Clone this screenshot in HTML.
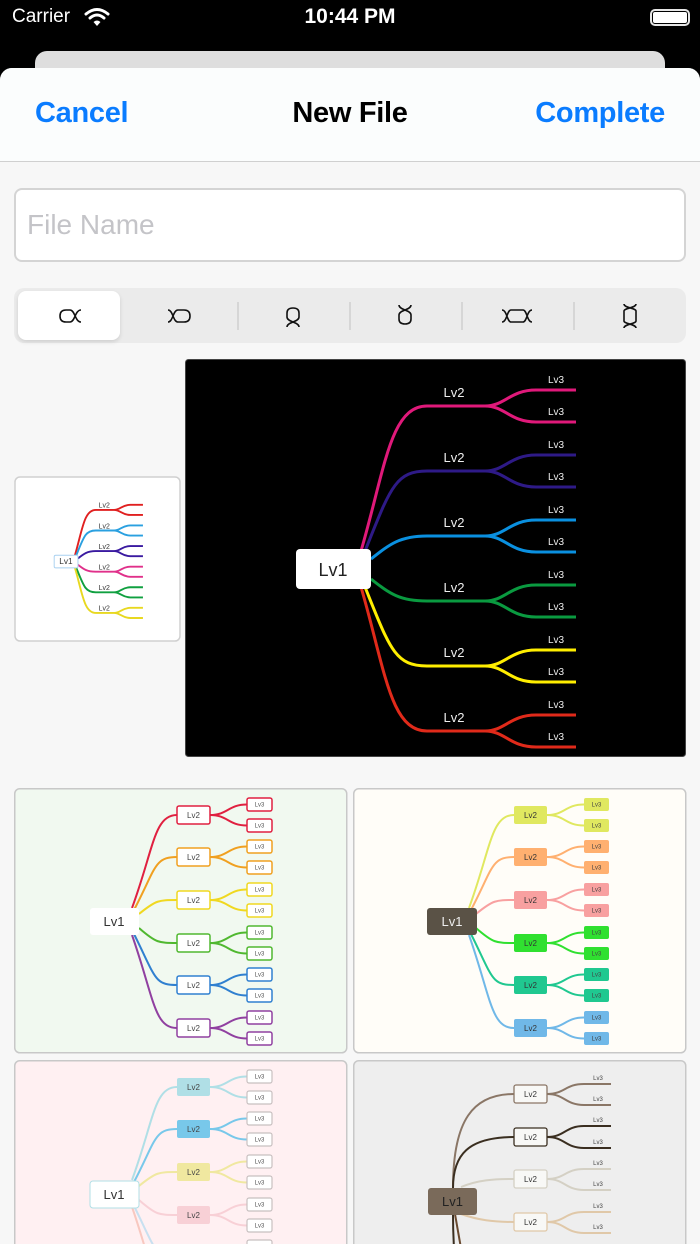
<!DOCTYPE html>
<html><head><meta charset="utf-8"><style>
*{margin:0;padding:0;box-sizing:border-box}
html,body{width:700px;height:1244px;overflow:hidden;background:#000}
#wrap{position:relative;width:700px;height:1244px;overflow:hidden;background:#000;font-family:"Liberation Sans",sans-serif}
.abs{position:absolute}
svg text{font-family:"Liberation Sans",sans-serif;text-anchor:middle}
</style></head><body><div id="wrap">
<div class="abs" style="left:12px;top:6px;color:#fff;font-size:19px">Carrier</div>
<svg class="abs" style="left:84px;top:7px" width="26" height="20" viewBox="0 0 26 20"><path d="M2,7 Q13,-2 24,7" stroke="#fff" stroke-width="3" fill="none" stroke-linecap="round"/><path d="M6,11 Q13,5 20,11" stroke="#fff" stroke-width="3" fill="none" stroke-linecap="round"/><path d="M9.5,15 L13,19 L16.5,15 Q13,12 9.5,15Z" fill="#fff"/></svg>
<div class="abs" style="left:0;width:700px;top:5px;text-align:center;color:#fff;font-size:21px;font-weight:bold">10:44 PM</div>
<div class="abs" style="left:650px;top:9px;width:40px;height:17px;border:2px solid #fff;border-radius:5px;opacity:.9"></div>
<div class="abs" style="left:653px;top:12px;width:34px;height:11px;background:#fff;border-radius:2px"></div>
<div class="abs" style="left:35px;top:51px;width:630px;height:40px;background:#dedede;border-radius:12px"></div>
<div class="abs" style="left:0;top:68px;width:700px;height:1176px;background:#f7f7f7;border-radius:12px 12px 0 0"></div>
<div class="abs" style="left:0;top:68px;width:700px;height:94px;background:#fbfdfd;border-radius:12px 12px 0 0;border-bottom:1px solid #d0d0d0"></div>
<div class="abs" style="left:35px;top:97px;color:#0a7cff;font-size:29px;font-weight:bold;letter-spacing:-0.3px">Cancel</div>
<div class="abs" style="left:0;width:700px;top:97px;text-align:center;color:#000;font-size:29px;font-weight:bold;letter-spacing:-0.3px">New File</div>
<div class="abs" style="right:35px;top:97px;color:#0a7cff;font-size:29px;font-weight:bold;letter-spacing:-0.3px">Complete</div>
<div class="abs" style="left:14px;top:188px;width:672px;height:74px;background:#fff;border:2px solid #d4d4d4;border-radius:8px;padding:19px 11px;font-size:28px;color:#c4c4c8">File Name</div>
<div class="abs" style="left:14px;top:288px;width:672px;height:55px;background:#ebebeb;border-radius:10px"></div>
<div class="abs" style="left:18px;top:291px;width:102px;height:49px;background:#fff;border-radius:8px;box-shadow:0 2px 4px rgba(0,0,0,.12)"></div>
<svg class="abs" style="left:14px;top:288px" width="672" height="55" viewBox="0 0 672 55" fill="none" stroke="#111" stroke-width="1.6">
<line x1="224" y1="14" x2="224" y2="42" stroke="#d0d0d0"/><line x1="336" y1="14" x2="336" y2="42" stroke="#d0d0d0"/><line x1="448" y1="14" x2="448" y2="42" stroke="#d0d0d0"/><line x1="560" y1="14" x2="560" y2="42" stroke="#d0d0d0"/>
<path d="M56,22 H52 Q46,22 46,28 Q46,34 52,34 H56 M56,22 C61,22 61,34 67,34 M56,34 C61,34 61,22 67,22"/>
<path d="M164,22 H170 Q176,22 176,28 Q176,34 170,34 H164 M164,22 C159,22 159,34 154,34 M164,34 C159,34 159,22 154,22"/>
<path d="M273,29 V25 Q273,20 279,20 Q285,20 285,25 V29 M273,29 C273,34 285,34 285,39 M285,29 C285,34 273,34 273,39"/>
<path d="M385,27 V31 Q385,36 391,36 Q397,36 397,31 V27 M385,27 C385,22 397,22 397,17 M397,27 C397,22 385,22 385,17"/>
<path d="M497,22 H509 M497,34 H509 M509,22 C513,22 513,34 518,34 M509,34 C513,34 513,22 518,22 M497,22 C493,22 493,34 488,34 M497,34 C493,34 493,22 488,22"/>
<path d="M610,23 V33 M622,23 V33 M610,23 C610,20 622,20 622,16 M622,23 C622,20 610,20 610,16 M610,33 C610,36 622,36 622,40 M622,33 C622,36 610,36 610,40"/>
</svg>

<!-- thumbnail -->
<svg class="abs" style="left:14px;top:476px" width="167" height="166" viewBox="0 0 167 166">
<rect x="1" y="1" width="165" height="164" rx="5" fill="#fff" stroke="#d0d0d0" stroke-width="1.5"/>
<g transform="translate(5,19) scale(0.317)" fill="none" stroke-width="6">
<g stroke="#e02020"><path d="M176,192 C200,110 205,47 242,47 L300,47 C320,47 325,31 351,31 L391,31 M300,47 C320,47 325,63 351,63 L391,63"/></g>
<g stroke="#2aa0e0"><path d="M180,192 C205,130 210,112 242,112 L300,112 C320,112 325,96 351,96 L391,96 M300,112 C320,112 325,128 351,128 L391,128"/></g>
<g stroke="#3a1aa0"><path d="M186,200 C205,185 215,177 242,177 L300,177 C320,177 325,161 351,161 L391,161 M300,177 C320,177 325,193 351,193 L391,193"/></g>
<g stroke="#e0308a"><path d="M186,220 C205,235 215,242 242,242 L300,242 C320,242 325,226 351,226 L391,226 M300,242 C320,242 325,258 351,258 L391,258"/></g>
<g stroke="#10a040"><path d="M180,228 C205,290 210,307 242,307 L300,307 C320,307 325,291 351,291 L391,291 M300,307 C320,307 325,323 351,323 L391,323"/></g>
<g stroke="#e8d820"><path d="M176,228 C200,310 205,372 242,372 L300,372 C320,372 325,356 351,356 L391,356 M300,372 C320,372 325,388 351,388 L391,388"/></g>
<rect x="111" y="190" width="75" height="40" rx="5" fill="#fff" stroke="#a8d0f0" stroke-width="3"/>
<g fill="#333" stroke="none" font-size="22"><text x="148" y="218" font-size="26">Lv1</text>
<text x="269" y="40">Lv2</text><text x="269" y="105">Lv2</text><text x="269" y="170">Lv2</text><text x="269" y="235">Lv2</text><text x="269" y="300">Lv2</text><text x="269" y="365">Lv2</text></g>
</g></svg>

<!-- black map -->
<svg class="abs" style="left:185px;top:359px" width="501" height="398" viewBox="0 0 501 398">
<rect x="0.5" y="0.5" width="500" height="397" rx="3" fill="#000" stroke="#444"/>
<g fill="none" stroke-width="3">
<path stroke="#e0197a" d="M176,192 C200,110 205,47 242,47 L300,47 C320,47 325,31 351,31 L391,31 M300,47 C320,47 325,63 351,63 L391,63"/>
<path stroke="#2e1a87" d="M180,192 C205,130 210,112 242,112 L300,112 C320,112 325,96 351,96 L391,96 M300,112 C320,112 325,128 351,128 L391,128"/>
<path stroke="#0a90e0" d="M186,200 C205,185 215,177 242,177 L300,177 C320,177 325,161 351,161 L391,161 M300,177 C320,177 325,193 351,193 L391,193"/>
<path stroke="#0a9a40" d="M186,220 C205,235 215,242 242,242 L300,242 C320,242 325,226 351,226 L391,226 M300,242 C320,242 325,258 351,258 L391,258"/>
<path stroke="#ffee00" d="M180,228 C205,290 210,307 242,307 L300,307 C320,307 325,291 351,291 L391,291 M300,307 C320,307 325,323 351,323 L391,323"/>
<path stroke="#e02a1a" d="M176,228 C200,310 205,372 242,372 L300,372 C320,372 325,356 351,356 L391,356 M300,372 C320,372 325,388 351,388 L391,388"/>
</g>
<rect x="111" y="190" width="75" height="40" rx="4" fill="#fff"/>
<text x="148" y="217" font-size="18" fill="#222">Lv1</text>
<g fill="#eee" font-size="13"><text x="269" y="38">Lv2</text><text x="269" y="103">Lv2</text><text x="269" y="168">Lv2</text><text x="269" y="233">Lv2</text><text x="269" y="298">Lv2</text><text x="269" y="363">Lv2</text></g>
<g fill="#eee" font-size="10"><text x="371" y="24">Lv3</text><text x="371" y="56">Lv3</text><text x="371" y="89">Lv3</text><text x="371" y="121">Lv3</text><text x="371" y="154">Lv3</text><text x="371" y="186">Lv3</text><text x="371" y="219">Lv3</text><text x="371" y="251">Lv3</text><text x="371" y="284">Lv3</text><text x="371" y="316">Lv3</text><text x="371" y="349">Lv3</text><text x="371" y="381">Lv3</text></g>
</svg>

<!-- cell 1 -->
<svg class="abs" style="left:14px;top:788px" width="334" height="266" viewBox="0 0 334 266">
<rect x="0.75" y="0.75" width="332" height="264" rx="5" fill="#f1f9f0" stroke="#c8c8c8" stroke-width="1.5"/>
<g fill="none" stroke-width="2">
<path stroke="#e02040" d="M118,120 C140,60 140,27 163,27 M196,27 C214,27 214,16.5 233,16.5 M196,27 C214,27 214,37.5 233,37.5"/>
<path stroke="#f0a020" d="M120,122 C142,80 140,69 163,69 M196,69 C214,69 214,58.5 233,58.5 M196,69 C214,69 214,79.5 233,79.5"/>
<path stroke="#f0d820" d="M125,126 C142,112 145,112 163,112 M196,112 C214,112 214,101.5 233,101.5 M196,112 C214,112 214,122.5 233,122.5"/>
<path stroke="#50b830" d="M125,140 C142,155 145,155 163,155 M196,155 C214,155 214,144.5 233,144.5 M196,155 C214,155 214,165.5 233,165.5"/>
<path stroke="#3080d0" d="M120,146 C142,190 140,197 163,197 M196,197 C214,197 214,186.5 233,186.5 M196,197 C214,197 214,207.5 233,207.5"/>
<path stroke="#9040a0" d="M118,147 C140,210 140,240 163,240 M196,240 C214,240 214,229.5 233,229.5 M196,240 C214,240 214,250.5 233,250.5"/>
</g>
<rect x="76" y="120" width="49" height="27" rx="3" fill="#fff"/><text x="100" y="138" font-size="13" fill="#333">Lv1</text>
<g fill="#fff" stroke-width="1.5">
<rect x="163" y="18" width="33" height="18" rx="2" stroke="#e02040"/><rect x="163" y="60" width="33" height="18" rx="2" stroke="#f0a020"/><rect x="163" y="103" width="33" height="18" rx="2" stroke="#f0d820"/><rect x="163" y="146" width="33" height="18" rx="2" stroke="#50b830"/><rect x="163" y="188" width="33" height="18" rx="2" stroke="#3080d0"/><rect x="163" y="231" width="33" height="18" rx="2" stroke="#9040a0"/>
<rect x="233" y="10" width="25" height="13" rx="2" stroke="#e02040"/><rect x="233" y="31" width="25" height="13" rx="2" stroke="#e02040"/>
<rect x="233" y="52" width="25" height="13" rx="2" stroke="#f0a020"/><rect x="233" y="73" width="25" height="13" rx="2" stroke="#f0a020"/>
<rect x="233" y="95" width="25" height="13" rx="2" stroke="#f0d820"/><rect x="233" y="116" width="25" height="13" rx="2" stroke="#f0d820"/>
<rect x="233" y="138" width="25" height="13" rx="2" stroke="#50b830"/><rect x="233" y="159" width="25" height="13" rx="2" stroke="#50b830"/>
<rect x="233" y="180" width="25" height="13" rx="2" stroke="#3080d0"/><rect x="233" y="201" width="25" height="13" rx="2" stroke="#3080d0"/>
<rect x="233" y="223" width="25" height="13" rx="2" stroke="#9040a0"/><rect x="233" y="244" width="25" height="13" rx="2" stroke="#9040a0"/>
</g>
<g fill="#444" font-size="8"><text x="179.5" y="30">Lv2</text><text x="179.5" y="72">Lv2</text><text x="179.5" y="115">Lv2</text><text x="179.5" y="158">Lv2</text><text x="179.5" y="200">Lv2</text><text x="179.5" y="243">Lv2</text></g>
<g fill="#555" font-size="6"><text x="245.5" y="18.5">Lv3</text><text x="245.5" y="39.5">Lv3</text><text x="245.5" y="60.5">Lv3</text><text x="245.5" y="81.5">Lv3</text><text x="245.5" y="103.5">Lv3</text><text x="245.5" y="124.5">Lv3</text><text x="245.5" y="146.5">Lv3</text><text x="245.5" y="167.5">Lv3</text><text x="245.5" y="188.5">Lv3</text><text x="245.5" y="209.5">Lv3</text><text x="245.5" y="231.5">Lv3</text><text x="245.5" y="252.5">Lv3</text></g>
</svg>

<!-- cell 2 -->
<svg class="abs" style="left:353px;top:788px" width="334" height="266" viewBox="0 0 334 266">
<rect x="0.75" y="0.75" width="332" height="264" rx="5" fill="#fffdf8" stroke="#c8c8c8" stroke-width="1.5"/>
<g fill="none" stroke-width="2">
<path stroke="#e0e860" d="M116,120 C138,60 138,27 161,27 M194,27 C212,27 212,16.5 231,16.5 M194,27 C212,27 212,37.5 231,37.5"/>
<path stroke="#ffb070" d="M118,122 C140,80 138,69 161,69 M194,69 C212,69 212,58.5 231,58.5 M194,69 C212,69 212,79.5 231,79.5"/>
<path stroke="#f8a0a0" d="M123,126 C140,112 143,112 161,112 M194,112 C212,112 212,101.5 231,101.5 M194,112 C212,112 212,122.5 231,122.5"/>
<path stroke="#30e030" d="M123,140 C140,155 143,155 161,155 M194,155 C212,155 212,144.5 231,144.5 M194,155 C212,155 212,165.5 231,165.5"/>
<path stroke="#20c890" d="M118,146 C140,190 138,197 161,197 M194,197 C212,197 212,186.5 231,186.5 M194,197 C212,197 212,207.5 231,207.5"/>
<path stroke="#70b8e8" d="M116,147 C138,210 138,240 161,240 M194,240 C212,240 212,229.5 231,229.5 M194,240 C212,240 212,250.5 231,250.5"/>
</g>
<rect x="74" y="120" width="50" height="27" rx="3" fill="#5a5246"/><text x="99" y="138" font-size="13" fill="#eee">Lv1</text>
<g>
<rect x="161" y="18" width="33" height="18" rx="2" fill="#e0e860"/><rect x="161" y="60" width="33" height="18" rx="2" fill="#ffb070"/><rect x="161" y="103" width="33" height="18" rx="2" fill="#f8a0a0"/><rect x="161" y="146" width="33" height="18" rx="2" fill="#30e030"/><rect x="161" y="188" width="33" height="18" rx="2" fill="#20c890"/><rect x="161" y="231" width="33" height="18" rx="2" fill="#70b8e8"/>
<rect x="231" y="10" width="25" height="13" rx="2" fill="#e0e860"/><rect x="231" y="31" width="25" height="13" rx="2" fill="#e0e860"/>
<rect x="231" y="52" width="25" height="13" rx="2" fill="#ffb070"/><rect x="231" y="73" width="25" height="13" rx="2" fill="#ffb070"/>
<rect x="231" y="95" width="25" height="13" rx="2" fill="#f8a0a0"/><rect x="231" y="116" width="25" height="13" rx="2" fill="#f8a0a0"/>
<rect x="231" y="138" width="25" height="13" rx="2" fill="#30e030"/><rect x="231" y="159" width="25" height="13" rx="2" fill="#30e030"/>
<rect x="231" y="180" width="25" height="13" rx="2" fill="#20c890"/><rect x="231" y="201" width="25" height="13" rx="2" fill="#20c890"/>
<rect x="231" y="223" width="25" height="13" rx="2" fill="#70b8e8"/><rect x="231" y="244" width="25" height="13" rx="2" fill="#70b8e8"/>
</g>
<g fill="#333" font-size="8"><text x="177.5" y="30">Lv2</text><text x="177.5" y="72">Lv2</text><text x="177.5" y="115">Lv2</text><text x="177.5" y="158">Lv2</text><text x="177.5" y="200">Lv2</text><text x="177.5" y="243">Lv2</text></g>
<g fill="#444" font-size="6"><text x="243.5" y="18.5">Lv3</text><text x="243.5" y="39.5">Lv3</text><text x="243.5" y="60.5">Lv3</text><text x="243.5" y="81.5">Lv3</text><text x="243.5" y="103.5">Lv3</text><text x="243.5" y="124.5">Lv3</text><text x="243.5" y="146.5">Lv3</text><text x="243.5" y="167.5">Lv3</text><text x="243.5" y="188.5">Lv3</text><text x="243.5" y="209.5">Lv3</text><text x="243.5" y="231.5">Lv3</text><text x="243.5" y="252.5">Lv3</text></g>
</svg>

<!-- cell 3 -->
<svg class="abs" style="left:14px;top:1060px" width="334" height="184" viewBox="0 0 334 184">
<rect x="0.75" y="0.75" width="332" height="264" rx="5" fill="#fff0f2" stroke="#c8c8c8" stroke-width="1.5"/>
<g fill="none" stroke-width="2">
<path stroke="#b0dfe6" d="M118,120 C140,60 140,27 163,27 M196,27 C214,27 214,16.5 233,16.5 M196,27 C214,27 214,37.5 233,37.5"/>
<path stroke="#78c8ea" d="M120,122 C142,80 140,69 163,69 M196,69 C214,69 214,58.5 233,58.5 M196,69 C214,69 214,79.5 233,79.5"/>
<path stroke="#f0e8a0" d="M125,126 C142,112 145,112 163,112 M196,112 C214,112 214,101.5 233,101.5 M196,112 C214,112 214,122.5 233,122.5"/>
<path stroke="#f8d0d6" d="M125,140 C142,155 145,155 163,155 M196,155 C214,155 214,144.5 233,144.5 M196,155 C214,155 214,165.5 233,165.5"/>
<path stroke="#c8e0f0" d="M120,146 C142,190 140,197 163,197"/>
<path stroke="#f8c8c0" d="M118,147 C140,210 140,240 163,240"/>
</g>
<rect x="76" y="121" width="49" height="27" rx="3" fill="#fff" stroke="#b0dfe6"/><text x="100" y="139" font-size="13" fill="#333">Lv1</text>
<rect x="163" y="18" width="33" height="18" rx="2" fill="#b0dfe6"/><rect x="163" y="60" width="33" height="18" rx="2" fill="#78c8ea"/><rect x="163" y="103" width="33" height="18" rx="2" fill="#f0e8a0"/><rect x="163" y="146" width="33" height="18" rx="2" fill="#f8d0d6"/>
<g fill="#fff" stroke="#c8c0c0" stroke-width="1.2">
<rect x="233" y="10" width="25" height="13" rx="2"/><rect x="233" y="31" width="25" height="13" rx="2"/><rect x="233" y="52" width="25" height="13" rx="2"/><rect x="233" y="73" width="25" height="13" rx="2"/><rect x="233" y="95" width="25" height="13" rx="2"/><rect x="233" y="116" width="25" height="13" rx="2"/><rect x="233" y="138" width="25" height="13" rx="2"/><rect x="233" y="159" width="25" height="13" rx="2"/><rect x="233" y="180" width="25" height="13" rx="2"/></g>
<g fill="#444" font-size="8"><text x="179.5" y="30">Lv2</text><text x="179.5" y="72">Lv2</text><text x="179.5" y="115">Lv2</text><text x="179.5" y="158">Lv2</text></g>
<g fill="#555" font-size="6"><text x="245.5" y="18.5">Lv3</text><text x="245.5" y="39.5">Lv3</text><text x="245.5" y="60.5">Lv3</text><text x="245.5" y="81.5">Lv3</text><text x="245.5" y="103.5">Lv3</text><text x="245.5" y="124.5">Lv3</text><text x="245.5" y="146.5">Lv3</text><text x="245.5" y="167.5">Lv3</text></g>
</svg>

<!-- cell 4 -->
<svg class="abs" style="left:353px;top:1060px" width="334" height="184" viewBox="0 0 334 184">
<rect x="0.75" y="0.75" width="332" height="264" rx="5" fill="#eeeeee" stroke="#c8c8c8" stroke-width="1.5"/>
<g fill="none" stroke-width="2">
<path stroke="#8a7666" d="M100,128 C100,60 120,34 161,34 M194,34 C212,34 212,24 231,24 L258,24 M194,34 C212,34 212,45 231,45 L258,45"/>
<path stroke="#3a2e20" d="M100,128 C100,95 115,77 161,77 M194,77 C212,77 212,66 231,66 L258,66 M194,77 C212,77 212,88 231,88 L258,88"/>
<path stroke="#d4d0c4" d="M108,127 C125,120 140,119 161,119 M194,119 C212,119 212,109 231,109 L258,109 M194,119 C212,119 212,130 231,130 L258,130"/>
<path stroke="#e0c8a8" d="M108,154 C125,160 140,162 161,162 M194,162 C212,162 212,152 231,152 L258,152 M194,162 C212,162 212,173 231,173 L258,173"/>
<path stroke="#3a2e20" d="M100,154 C100,200 105,230 110,266"/>
<path stroke="#6a4a30" d="M102,154 C110,200 115,230 125,266"/>
</g>
<rect x="75" y="128" width="49" height="27" rx="3" fill="#7a6a5a"/><text x="99.5" y="146" font-size="13" fill="#222">Lv1</text>
<g fill="#f8f8f6" stroke-width="1.3">
<rect x="161" y="25" width="33" height="18" rx="2" stroke="#8a7666"/><rect x="161" y="68" width="33" height="18" rx="2" stroke="#3a2e20"/><rect x="161" y="110" width="33" height="18" rx="2" stroke="#d4d0c4"/><rect x="161" y="153" width="33" height="18" rx="2" stroke="#e0c8a8"/></g>
<g fill="#333" font-size="8"><text x="177.5" y="37">Lv2</text><text x="177.5" y="80">Lv2</text><text x="177.5" y="122">Lv2</text><text x="177.5" y="165">Lv2</text></g>
<g fill="#444" font-size="6"><text x="245" y="20">Lv3</text><text x="245" y="41">Lv3</text><text x="245" y="62">Lv3</text><text x="245" y="84">Lv3</text><text x="245" y="105">Lv3</text><text x="245" y="126">Lv3</text><text x="245" y="148">Lv3</text><text x="245" y="169">Lv3</text></g>
</svg>
</div></body></html>
